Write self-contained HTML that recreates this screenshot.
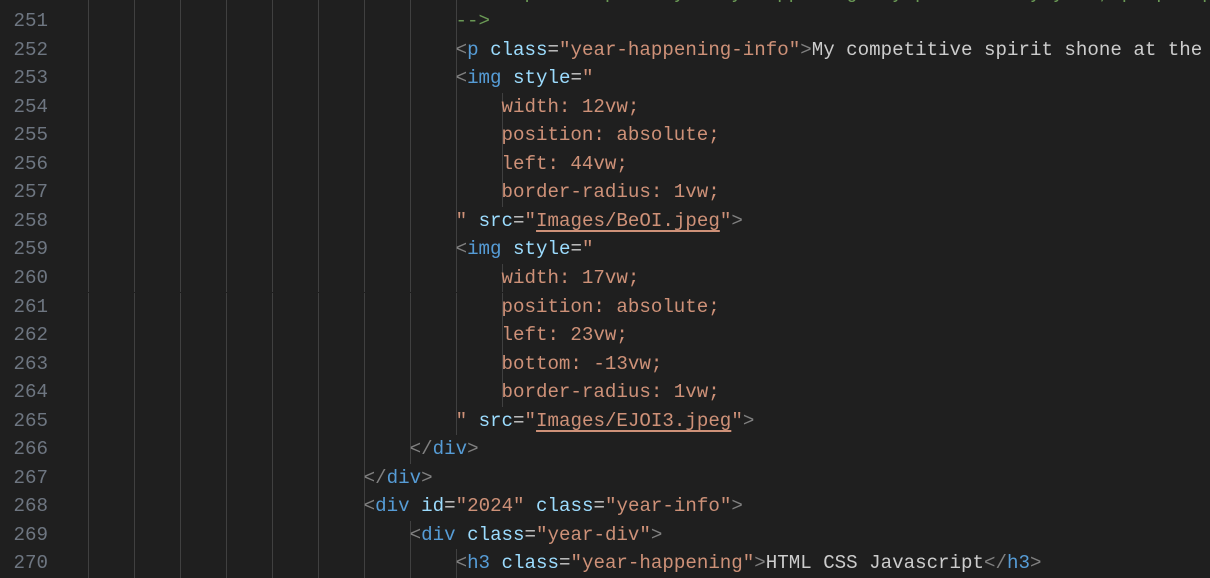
<!DOCTYPE html>
<html><head><meta charset="utf-8"><style>
html,body{margin:0;padding:0;background:#1f1f1f;width:1210px;height:577px;overflow:hidden}
.r{position:absolute;left:0;height:28.55px;width:1210px;overflow:hidden;font-family:"Liberation Mono",monospace;font-size:19.15px;line-height:28.55px;white-space:pre;color:#cccccc}
.n{position:absolute;left:0;width:48px;text-align:right;color:#6e7681}
.g{position:absolute;left:88px;top:0;height:28.55px;background:repeating-linear-gradient(to right,#404040 0 1px,transparent 1px 46px)}
.c{position:absolute;left:88px;top:0}
.t{color:#569cd6}.a{color:#9cdcfe}.s{color:#ce9178}.p{color:#808080}.m{color:#6a9955}
.u{text-decoration:underline;text-underline-offset:4px;text-decoration-thickness:2px}
</style></head><body>
<div class="r" style="top:-21.5px"><div class="n">250</div><div class="g" style="width:369px"></div><div class="c"><span class="m">                                    I participated yearly happening olympiads every year, people places</span></div></div>
<div class="r" style="top:7px"><div class="n">251</div><div class="g" style="width:369px"></div><div class="c"><span class="m">                                --&gt;</span></div></div>
<div class="r" style="top:35.55px"><div class="n">252</div><div class="g" style="width:369px"></div><div class="c">                                <span class="p">&lt;</span><span class="t">p</span> <span class="a">class</span>=<span class="s">"year-happening-info"</span><span class="p">&gt;</span>My competitive spirit shone at the</div></div>
<div class="r" style="top:64.1px"><div class="n">253</div><div class="g" style="width:369px"></div><div class="c">                                <span class="p">&lt;</span><span class="t">img</span> <span class="a">style</span>=<span class="s">"</span></div></div>
<div class="r" style="top:92.65px"><div class="n">254</div><div class="g" style="width:415px"></div><div class="c"><span class="s">                                    width: 12vw;</span></div></div>
<div class="r" style="top:121.2px"><div class="n">255</div><div class="g" style="width:415px"></div><div class="c"><span class="s">                                    position: absolute;</span></div></div>
<div class="r" style="top:149.75px"><div class="n">256</div><div class="g" style="width:415px"></div><div class="c"><span class="s">                                    left: 44vw;</span></div></div>
<div class="r" style="top:178.3px"><div class="n">257</div><div class="g" style="width:415px"></div><div class="c"><span class="s">                                    border-radius: 1vw;</span></div></div>
<div class="r" style="top:206.85px"><div class="n">258</div><div class="g" style="width:369px"></div><div class="c">                                <span class="s">"</span> <span class="a">src</span>=<span class="s">"<span class="u">Images/BeOI.jpeg</span>"</span><span class="p">&gt;</span></div></div>
<div class="r" style="top:235.4px"><div class="n">259</div><div class="g" style="width:369px"></div><div class="c">                                <span class="p">&lt;</span><span class="t">img</span> <span class="a">style</span>=<span class="s">"</span></div></div>
<div class="r" style="top:263.95px"><div class="n">260</div><div class="g" style="width:415px"></div><div class="c"><span class="s">                                    width: 17vw;</span></div></div>
<div class="r" style="top:292.5px"><div class="n">261</div><div class="g" style="width:415px"></div><div class="c"><span class="s">                                    position: absolute;</span></div></div>
<div class="r" style="top:321.05px"><div class="n">262</div><div class="g" style="width:415px"></div><div class="c"><span class="s">                                    left: 23vw;</span></div></div>
<div class="r" style="top:349.6px"><div class="n">263</div><div class="g" style="width:415px"></div><div class="c"><span class="s">                                    bottom: -13vw;</span></div></div>
<div class="r" style="top:378.15px"><div class="n">264</div><div class="g" style="width:415px"></div><div class="c"><span class="s">                                    border-radius: 1vw;</span></div></div>
<div class="r" style="top:406.7px"><div class="n">265</div><div class="g" style="width:369px"></div><div class="c">                                <span class="s">"</span> <span class="a">src</span>=<span class="s">"<span class="u">Images/EJOI3.jpeg</span>"</span><span class="p">&gt;</span></div></div>
<div class="r" style="top:435.25px"><div class="n">266</div><div class="g" style="width:323px"></div><div class="c">                            <span class="p">&lt;/</span><span class="t">div</span><span class="p">&gt;</span></div></div>
<div class="r" style="top:463.8px"><div class="n">267</div><div class="g" style="width:277px"></div><div class="c">                        <span class="p">&lt;/</span><span class="t">div</span><span class="p">&gt;</span></div></div>
<div class="r" style="top:492.35px"><div class="n">268</div><div class="g" style="width:277px"></div><div class="c">                        <span class="p">&lt;</span><span class="t">div</span> <span class="a">id</span>=<span class="s">"2024"</span> <span class="a">class</span>=<span class="s">"year-info"</span><span class="p">&gt;</span></div></div>
<div class="r" style="top:520.9px"><div class="n">269</div><div class="g" style="width:323px"></div><div class="c">                            <span class="p">&lt;</span><span class="t">div</span> <span class="a">class</span>=<span class="s">"year-div"</span><span class="p">&gt;</span></div></div>
<div class="r" style="top:549.45px"><div class="n">270</div><div class="g" style="width:369px"></div><div class="c">                                <span class="p">&lt;</span><span class="t">h3</span> <span class="a">class</span>=<span class="s">"year-happening"</span><span class="p">&gt;</span>HTML CSS Javascript<span class="p">&lt;/</span><span class="t">h3</span><span class="p">&gt;</span></div></div>
</body></html>
